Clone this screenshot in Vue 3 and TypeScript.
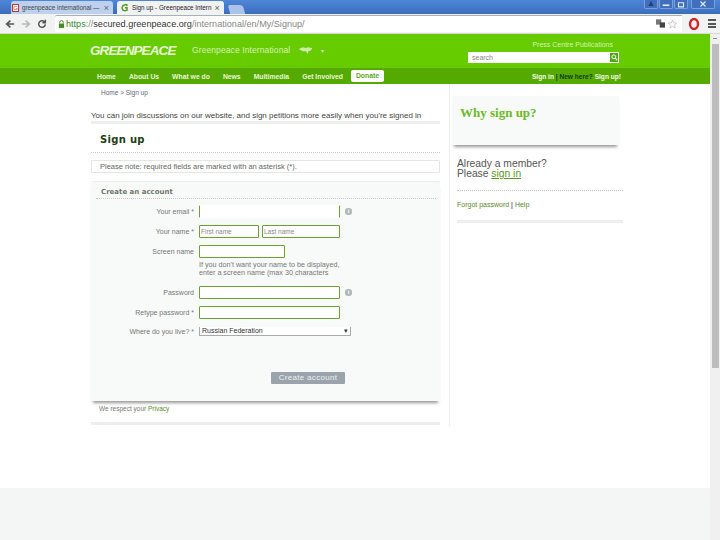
<script setup lang="ts">
interface NavItem { label: string; active?: boolean }
const nav: NavItem[] = [
  { label: 'Home' }, { label: 'About Us' }, { label: 'What we do' }, { label: 'News' },
  { label: 'Multimedia' }, { label: 'Get Involved' }, { label: 'Donate', active: true },
]
</script>

<template>
  <div class="screen">
    <div class="titlebar">
      <div class="tab back">
        <span class="favicon red">G</span>
        <span class="tabtext">greenpeace international —</span>
        <span class="close">×</span>
      </div>
      <div class="tab front">
        <svg class="gicon" viewBox="0 0 12 12"><path d="M10 3 7 1.500 3 3 1.500 6.500 3 10l3 1 3-1V6.500H6" fill="none" stroke="#4d9e1c" stroke-width="2.200"/></svg>
        <span class="tabtext">Sign up - Greenpeace Intern</span>
        <span class="close">×</span>
      </div>
      <div class="newtab"></div>
      <div class="winbtns">
        <span class="wbtn small"><svg viewBox="0 0 12 9"><path d="M6 1 9 7H3Z" fill="#1d3e78"/></svg></span>
        <span class="wbtn small"><svg viewBox="0 0 12 9"><path d="M2 6h8" stroke="#dfe9f7" stroke-width="2"/></svg></span>
        <span class="wbtn small"><svg viewBox="0 0 12 9"><path d="M3 3h6v5H3Z" fill="none" stroke="#dfe9f7" stroke-width="1.400"/></svg></span>
        <span class="wbtn wide"><svg viewBox="0 0 12 9"><path d="M3 1.500 9 7.500M9 1.500 3 7.500" stroke="#dfe9f7" stroke-width="1.500"/></svg></span>
      </div>
    </div>

    <div class="toolbar">
      <svg class="tool" viewBox="0 0 12 12"><path d="M11 6H3M6.500 2 2 6l4.500 4" fill="none" stroke="#555" stroke-width="2"/></svg>
      <svg class="tool" viewBox="0 0 12 12"><path d="M1 6h8M5.500 2 10 6l-4.500 4" fill="none" stroke="#b9b9b9" stroke-width="2"/></svg>
      <svg class="tool" viewBox="0 0 12 12"><path d="M10 6.500A4 4 0 1 1 8.700 3L10 4.200M10 1v3.500H6.500" fill="none" stroke="#555" stroke-width="1.800"/></svg>
      <div class="omnibox">
        <svg class="lock" viewBox="0 0 8 9"><path d="M2 4V2.500a2 2 0 0 1 4 0V4" fill="none" stroke="#4a8a22"/><rect x="1" y="4" width="6" height="5" fill="#4a8a22"/></svg>
        <span class="url"><b>https</b><i>://</i><span>secured.greenpeace.org</span><i>/international/en/My/Signup/</i></span>
        <svg class="trans" viewBox="0 0 12 11"><rect x="0" y="0" width="7" height="7" fill="#777"/><rect x="5" y="4" width="7" height="7" fill="#444"/></svg>
        <svg class="star" viewBox="0 0 12 12"><path d="M6 .8 7.600 4.500l4 .3-3 2.600.9 3.900L6 9.200l-3.500 2.100.9-3.900-3-2.600 4-.3Z" fill="#fff" stroke="#aaa" stroke-width=".8"/></svg>
      </div>
      <svg class="opera" viewBox="0 0 12 12"><ellipse cx="6" cy="6" rx="4" ry="5" fill="none" stroke="#d3232a" stroke-width="2.400"/></svg>
      <div class="menu"><i></i><i></i><i></i></div>
    </div>

    <div class="viewport">
      <div class="page">
        <header class="gp-head">
          <div class="gp-inner">
            <span class="logo">GREENPEACE</span>
            <span class="region">Greenpeace International</span>
            <svg class="globe" viewBox="0 0 20 10"><path d="M1 3 6 1l4 1 2-1 6 1-2 3-3 1-1 3-2-3-4 0-2-1Z" fill="#cdeaa6"/></svg>
            <span class="caret">▾</span>
            <div class="head-right">
              <div class="head-links">Press Centre  Publications</div>
              <div class="search">
                <span>search</span>
                <span class="search-btn"><svg viewBox="0 0 10 10"><circle cx="4" cy="4" r="2.700" fill="none" stroke="#fff" stroke-width="1.400"/><path d="M6 6 9 9" stroke="#fff" stroke-width="1.600"/></svg></span>
              </div>
            </div>
          </div>
        </header>
        <nav class="gp-nav">
          <div class="nav-left">
            <span v-for="n in nav" :key="n.label" :class="['nav-item', { donate: n.active }]">{{ n.label }}</span>
          </div>
          <div class="nav-right">Sign in <em>| New here?</em> Sign up!</div>
        </nav>

        <div class="content">
          <main class="main">
            <div class="crumb">Home &gt; Sign up</div>
            <p class="intro">You can join discussions on our website, and sign petitions more easily when you're signed in</p>
            <div class="rule"></div>
            <h1>Sign up</h1>
            <div class="dots"></div>
            <div class="notice">Please note: required fields are marked with an asterisk (*).</div>
            <section class="card">
              <h2>Create an account</h2>
              <div class="dots tight"></div>
              <div class="row first">
                <label>Your email *</label>
                <input class="wide-input plain" />
                <span class="info">i</span>
              </div>
              <div class="row">
                <label>Your name *</label>
                <input class="half" placeholder="First name" />
                <input class="half" placeholder="Last name" />
              </div>
              <div class="row">
                <label>Screen name</label>
                <input class="screen-input" />
              </div>
              <div class="help">If you don't want your name to be displayed,<br />enter a screen name (max 30 characters</div>
              <div class="row">
                <label>Password</label>
                <input class="wide-input" />
                <span class="info">i</span>
              </div>
              <div class="row">
                <label>Retype password *</label>
                <input class="wide-input" />
              </div>
              <div class="row select-row">
                <label>Where do you live? *</label>
                <div class="select">Russian Federation<span>▾</span></div>
              </div>
              <div class="submit"><button type="button">Create account</button></div>
            </section>
            <div class="respect">We respect your <a>Privacy</a></div>
            <div class="rule bottom"></div>
          </main>

          <aside class="side">
            <div class="why"><h3>Why sign up?</h3></div>
            <p class="member">Already a member?<br />Please <a>sign in</a></p>
            <div class="dots side-dots"></div>
            <div class="forgot"><a>Forgot password</a> <b>|</b> <a>Help</a></div>
            <div class="rule side-rule"></div>
          </aside>
        </div>
        <footer class="footer"></footer>
      </div>

      <div class="scrollbar">
        <span class="arrow"></span>
        <div class="thumb"></div>
      </div>
    </div>
  </div>
</template>

<style>
html, body { margin: 0; height: 100%; overflow: hidden; background: #fff; }
</style>

<style scoped>
.screen { width: 720px; height: 540px; display: flex; flex-direction: column; font-family: "Liberation Sans", Arial, sans-serif; overflow: hidden; }

.titlebar { height: 14px; background: linear-gradient(#4f86d6, #3c6dbd); display: flex; align-items: flex-end; padding-left: 11px; gap: 4px; flex: none; }
.tab { height: 13px; width: 102px; box-sizing: border-box; display: flex; align-items: center; gap: 3px; padding: 0 4px 0 1px; border-radius: 3px 3px 0 0; font-size: 6.300px; color: #444; white-space: nowrap; }
.tab.back { background: #bdd0ee; }
.tab.front { background: #f1f2f2; width: 107px; color: #222; padding: 0 7px 0 4px; }
.tabtext { flex: 1; }
.favicon { width: 7px; height: 8px; font-size: 6px; text-align: center; background: #fff; border: 1px solid #c0392b; box-sizing: border-box; line-height: 6px; color: #c0392b; flex: none; }
.gicon { width: 8px; height: 9px; flex: none; }
.close { font-size: 9px; color: #666; flex: none; }
.newtab { width: 15px; height: 9px; background: #a9c3ea; border-radius: 2px 3px 0 0; transform: skewX(15deg); margin-left: 1px; }
.winbtns { margin-left: auto; display: flex; align-self: flex-start; gap: 1px; margin-right: 5px; }
.wbtn { height: 9px; background: #3f6fbd; border: 1px solid #7ba0dc; border-top: 0; box-sizing: border-box; border-radius: 0 0 2px 2px; display: flex; align-items: center; justify-content: center; }
.wbtn svg { width: 10px; height: 8px; }
.small { width: 14px; }
.wide { width: 24px; margin-left: 2px; }

.toolbar { height: 20px; background: #f1f2f2; border-bottom: 1px solid #d8d8d8; box-sizing: border-box; display: flex; align-items: center; flex: none; padding-left: 5px; }
.tool { width: 10px; height: 10px; margin-right: 6px; flex: none; }
.tool:nth-child(3) { margin-right: 8px; }
.omnibox { width: 627px; height: 17px; background: #fff; border-top: 1px solid #a8b0bb; box-sizing: border-box; margin-top: -1px; display: flex; align-items: center; padding: 0 5px 0 3px; border-radius: 2px 0 0 2px; }
.lock { width: 7px; height: 8px; margin-right: 1px; }
.url { font-size: 9.100px; color: #333; flex: 1; white-space: nowrap; }
.url b { font-weight: 400; color: #2f8a1f; }
.url i { font-style: normal; color: #888; }
.trans { width: 9px; height: 9px; margin-right: 3px; }
.star { width: 9px; height: 10px; }
.opera { width: 12px; height: 12px; margin-left: 6px; }
.menu { width: 8px; margin-left: 8px; display: flex; flex-direction: column; gap: 1.500px; }
.menu i { height: 2px; background: #555; display: block; }

.viewport { flex: 1; min-height: 0; display: flex; }
.page { width: 710px; flex: none; display: flex; flex-direction: column; }

.gp-head { height: 34px; background: #66cc00; flex: none; }
.gp-inner { display: flex; align-items: flex-start; padding-left: 90px; }
.logo { font: italic 700 13.500px/15px "Liberation Sans", sans-serif; color: #e9f7d7; margin-top: 9px; letter-spacing: -0.9px; width: 102px; flex: none; }
.region { font-size: 8.500px; line-height: 11px; color: #d6f1b1; margin-top: 11px; white-space: nowrap; letter-spacing: .1px; }
.globe { width: 16px; height: 9px; margin: 12px 0 0 8px; }
.caret { font-size: 6px; color: #d6f1b1; margin: 13px 0 0 7px; }
.head-right { margin-left: auto; width: 152px; margin-right: 91px; text-align: right; }
.head-links { font-size: 7px; line-height: 9px; color: #d6f1b1; margin-top: 6px; padding-right: 6px; white-space: pre; }
.search { margin-top: 3px; height: 11px; background: #fff; box-sizing: border-box; display: flex; justify-content: space-between; align-items: center; font-size: 7px; color: #888; padding-left: 4px; text-align: left; width: 151px; margin-left: auto; }
.search-btn { width: 10px; height: 11px; background: #4da916; border: 1px solid #fff; box-sizing: border-box; display: flex; align-items: center; justify-content: center; }
.search-btn svg { width: 7px; height: 7px; }

.gp-nav { height: 16px; background: #55aa00; flex: none; display: flex; align-items: center; padding-left: 97px; font-size: 6.800px; font-weight: 700; color: #e8f6d7; justify-content: space-between; padding-right: 89px; }
.nav-left { display: flex; gap: 13px; align-items: center; }
.nav-item { white-space: nowrap; }
.donate { background: #fff; color: #5ba81b; height: 12px; line-height: 12px; padding: 0 5px; border-radius: 2px; margin-left: -5px; }
.nav-right { white-space: nowrap; color: #f2fbe6; font-size: 6.600px; }
.nav-right em { font-style: normal; color: #123c00; }

.content { flex: 1; min-height: 0; display: flex; background: #fff; }
.main { width: 349px; margin-left: 91px; flex: none; padding-top: 5px; }
.crumb { font-size: 6.500px; line-height: 8px; color: #667; padding-left: 10px; }
.intro { margin: 14px 0 0; font-size: 8px; line-height: 9px; color: #444; white-space: nowrap; }
.rule { height: 3px; background: #eeeeee; margin-top: 1px; }
h1 { font: 700 10px/13px "DejaVu Sans", sans-serif; color: #1f3d14; margin: 9px 0 0 9px; letter-spacing: .3px; }
.dots { border-top: 1px dotted #c9c9c9; margin-top: 6px; }
.notice { margin-top: 7px; height: 13px; box-sizing: border-box; border: 1px solid #e4e6e6; border-radius: 1px; font-size: 7.500px; line-height: 11px; color: #666; padding-left: 8px; }
.card { margin-top: 8px; height: 220px; background: #f8f9f9; border-top: 1px solid #eceeee; border-radius: 2px 2px 0 0; box-shadow: 0 4px 3px -2px #999; padding: 6px 4px 0 5px; box-sizing: border-box; }
h2 { font: 700 7px/9px "DejaVu Sans", sans-serif; color: #6c7a6c; margin: 0 0 0 5px; }
.tight { margin-top: 1px; }
.row { display: flex; align-items: center; margin-top: 7px; }
.row.first { margin-top: 6px; }
.row label { width: 103px; padding-right: 5px; box-sizing: border-box; text-align: right; font-size: 7px; color: #777; white-space: nowrap; flex: none; }
input { box-sizing: border-box; height: 13px; border: 1px solid #6da02f; border-radius: 1px; background: #fff; padding: 0 1px; margin: 0; font: 6.500px "Liberation Sans", sans-serif; outline: 0; }
input::placeholder { color: #888; }
.wide-input { width: 141px; }
.plain { border-top-color: transparent; border-bottom-color: transparent; }
.half { width: 60px; margin-right: 3px; }
.half + .half { width: 78px; margin-right: 0; }
.screen-input { width: 86px; }
.info { width: 7px; height: 7px; border-radius: 3px; background: #aeb9b9; color: #fff; font: 700 6px/7px "Liberation Sans", sans-serif; text-align: center; margin-left: 5px; }
.help { margin: 3px 0 0 103px; font-size: 7.200px; line-height: 8px; color: #777; white-space: nowrap; }
.help + .row { margin-top: 9px; }
.select-row { margin-top: 8px; }
.select { width: 152px; height: 9px; background: #fff; border: 1px solid #aaa; border-width: 0 1px 1px 1px; box-sizing: border-box; font-size: 7px; line-height: 8px; color: #333; display: flex; justify-content: space-between; padding: 0 2px; white-space: nowrap; }
.submit { display: flex; justify-content: flex-end; margin-top: 36px; padding-right: 91px; }
.submit button { width: 74px; height: 12px; padding: 0; background: #9ba3ad; border: 0; border-radius: 1px; color: #eef0f2; font: 8px/12px "Liberation Sans", sans-serif; letter-spacing: .3px; }
.respect { margin-top: 4px; padding-left: 8px; font-size: 6.500px; line-height: 8px; color: #777; }
.respect a { color: #5a8a28; }
.bottom { margin-top: 9px; }

.side { margin-left: 9px; flex: none; width: 173px; border-left: 1px solid #eeeeee; padding-left: 2px; padding-top: 12px; box-sizing: border-box; align-self: flex-start; height: 342px; }
.why { width: 167px; height: 49px; background: #f8f9f9; box-shadow: 0 4px 3px -2px #999; padding: 9px 8px; box-sizing: border-box; }
h3 { margin: 0; font: 700 13px/16px "Liberation Serif", serif; color: #6cbb22; }
.member { margin: 14px 0 0 5px; font-size: 10.300px; line-height: 10px; color: #555; }
.member a { color: #5a9a22; text-decoration: underline; }
.side-dots { margin: 11px 0 0 5px; width: 166px; }
.forgot { margin: 9px 0 0 5px; font-size: 7px; line-height: 9px; color: #5a8a28; }
.forgot b { color: #111; font-weight: 400; }
.side-rule { margin: 11px 0 0 5px; width: 166px; }

.footer { height: 52px; background: #f4f5f5; flex: none; }

.scrollbar { width: 10px; background: #f0f0f0; flex: none; display: flex; flex-direction: column; align-items: center; }
.arrow { margin-top: 4px; width: 4px; border-top: 1px solid #888; height: 1px; }
.thumb { width: 7px; height: 324px; margin-top: 4px; margin-left: 1px; background: #bdbdbd; }
</style>
